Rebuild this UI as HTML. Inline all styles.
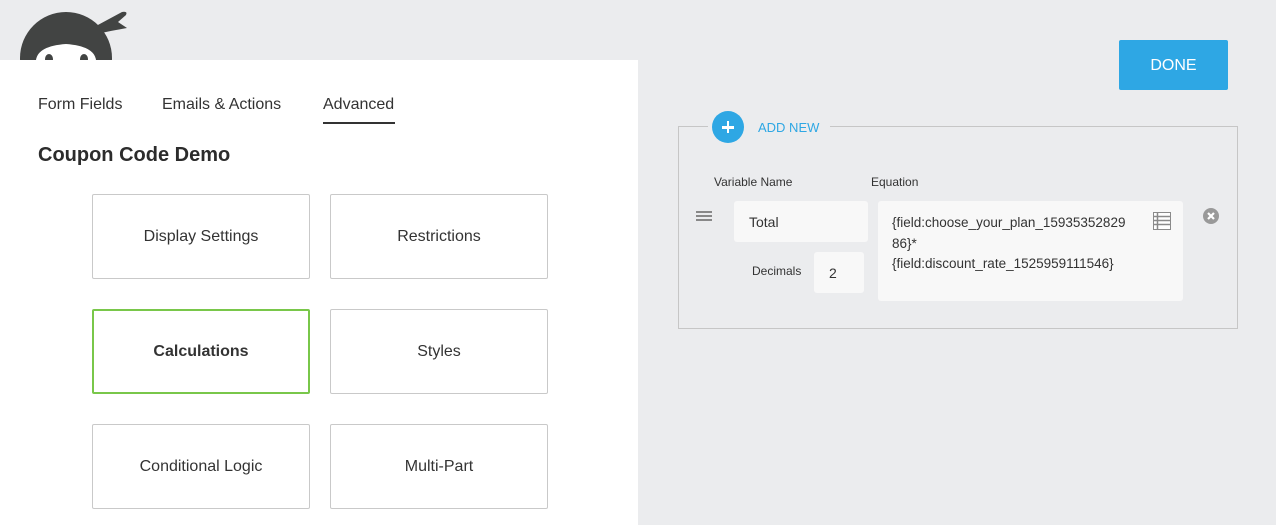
<!DOCTYPE html>
<html><head><style>
body{margin:0;width:1276px;height:525px;background:#ebecee;font-family:"Liberation Sans",sans-serif;position:relative;overflow:hidden;color:#333}
.abs{position:absolute}
.panel{left:0;top:60px;width:638px;height:465px;background:#fff}
.tab{top:96px;font-size:16px;color:#333}
.card{width:216px;height:83px;border:1px solid #c9c9c9;border-radius:2px;display:flex;align-items:center;justify-content:center;font-size:16px;color:#333;background:#fff}
.lbl{font-size:12px;color:#333}
.inp{background:#f8f8f8;border-radius:3px}
</style></head><body>
<svg class="abs" style="left:0;top:0" width="140" height="60" viewBox="0 0 140 60">
<circle cx="66" cy="58" r="46" fill="#424443"/>
<path d="M96 26 L122 12 Q128 11 126 15 L118 22 L127 28 Q110 31 101 33 Z" fill="#424443"/>
<path d="M36 60 Q38 46 66 44 Q94 46 96 60 Z" fill="#fff"/>
<ellipse cx="49" cy="59" rx="4" ry="5" fill="#424443"/>
<ellipse cx="84" cy="59" rx="4" ry="5" fill="#424443"/>
</svg>
<div class="abs panel"></div>
<div class="abs tab" style="left:38px">Form Fields</div>
<div class="abs tab" style="left:162px">Emails &amp; Actions</div>
<div class="abs tab" style="left:323px">Advanced</div>
<div class="abs" style="left:323px;top:122px;width:72px;height:2px;background:#333"></div>
<div class="abs" style="left:38px;top:144px;font-size:20px;font-weight:bold;color:#2c2c2c">Coupon Code Demo</div>
<div class="abs card" style="left:92px;top:194px">Display Settings</div>
<div class="abs card" style="left:330px;top:194px">Restrictions</div>
<div class="abs card" style="left:92px;top:309px;border:2px solid #79c74a;width:214px;height:81px;font-weight:bold">Calculations</div>
<div class="abs card" style="left:330px;top:309px">Styles</div>
<div class="abs card" style="left:92px;top:424px">Conditional Logic</div>
<div class="abs card" style="left:330px;top:424px">Multi-Part</div>
<div class="abs" style="left:1119px;top:40px;width:109px;height:50px;background:#2ea7e4;border-radius:2px;color:#fff;font-size:16px;display:flex;align-items:center;justify-content:center;padding-top:2px;box-sizing:border-box">DONE</div>
<div class="abs" style="left:678px;top:126px;width:558px;height:202px;border:1px solid #c6c6c6;border-top:none"></div>
<div class="abs" style="left:678px;top:126px;width:30px;height:1px;background:#c6c6c6"></div>
<div class="abs" style="left:830px;top:126px;width:408px;height:1px;background:#c6c6c6"></div>
<div class="abs" style="left:712px;top:111px;width:32px;height:32px;border-radius:50%;background:#2ea7e4"></div>
<div class="abs" style="left:722px;top:126px;width:12px;height:2.5px;background:#fff"></div>
<div class="abs" style="left:726.8px;top:121px;width:2.5px;height:12px;background:#fff"></div>
<div class="abs" style="left:758px;top:120px;font-size:13px;color:#2ea7e4">ADD NEW</div>
<div class="abs lbl" style="left:714px;top:175px">Variable Name</div>
<div class="abs lbl" style="left:871px;top:175px">Equation</div>
<div class="abs" style="left:696px;top:211px;width:16px;height:2px;background:#888"></div>
<div class="abs" style="left:696px;top:215px;width:16px;height:2px;background:#888"></div>
<div class="abs" style="left:696px;top:219px;width:16px;height:2px;background:#888"></div>
<div class="abs inp" style="left:734px;top:201px;width:134px;height:41px"></div>
<div class="abs" style="left:749px;top:214px;font-size:14px">Total</div>
<div class="abs lbl" style="left:752px;top:264px">Decimals</div>
<div class="abs inp" style="left:814px;top:252px;width:50px;height:41px"></div>
<div class="abs" style="left:829px;top:265px;font-size:14px">2</div>
<div class="abs inp" style="left:878px;top:201px;width:305px;height:100px"></div>
<div class="abs" style="left:892px;top:213px;font-size:13.5px;line-height:20.5px;color:#333">{field:choose_your_plan_15935352829<br>86}*<br>{field:discount_rate_1525959111546}</div>
<svg class="abs" style="left:1153px;top:212px" width="18" height="18"><rect x="0.5" y="0.5" width="17" height="17" fill="#fff" stroke="#8a8a8a"/><g stroke="#8a8a8a" stroke-width="1.5"><line x1="0" y1="4.5" x2="18" y2="4.5"/><line x1="0" y1="8.5" x2="18" y2="8.5"/><line x1="0" y1="12.5" x2="18" y2="12.5"/><line x1="4.5" y1="0" x2="4.5" y2="18"/></g></svg>
<svg class="abs" style="left:1203px;top:208px" width="16" height="16"><circle cx="8" cy="8" r="8" fill="#999"/><path d="M5 5L11 11M11 5L5 11" stroke="#fff" stroke-width="2.2"/></svg>
</body></html>
